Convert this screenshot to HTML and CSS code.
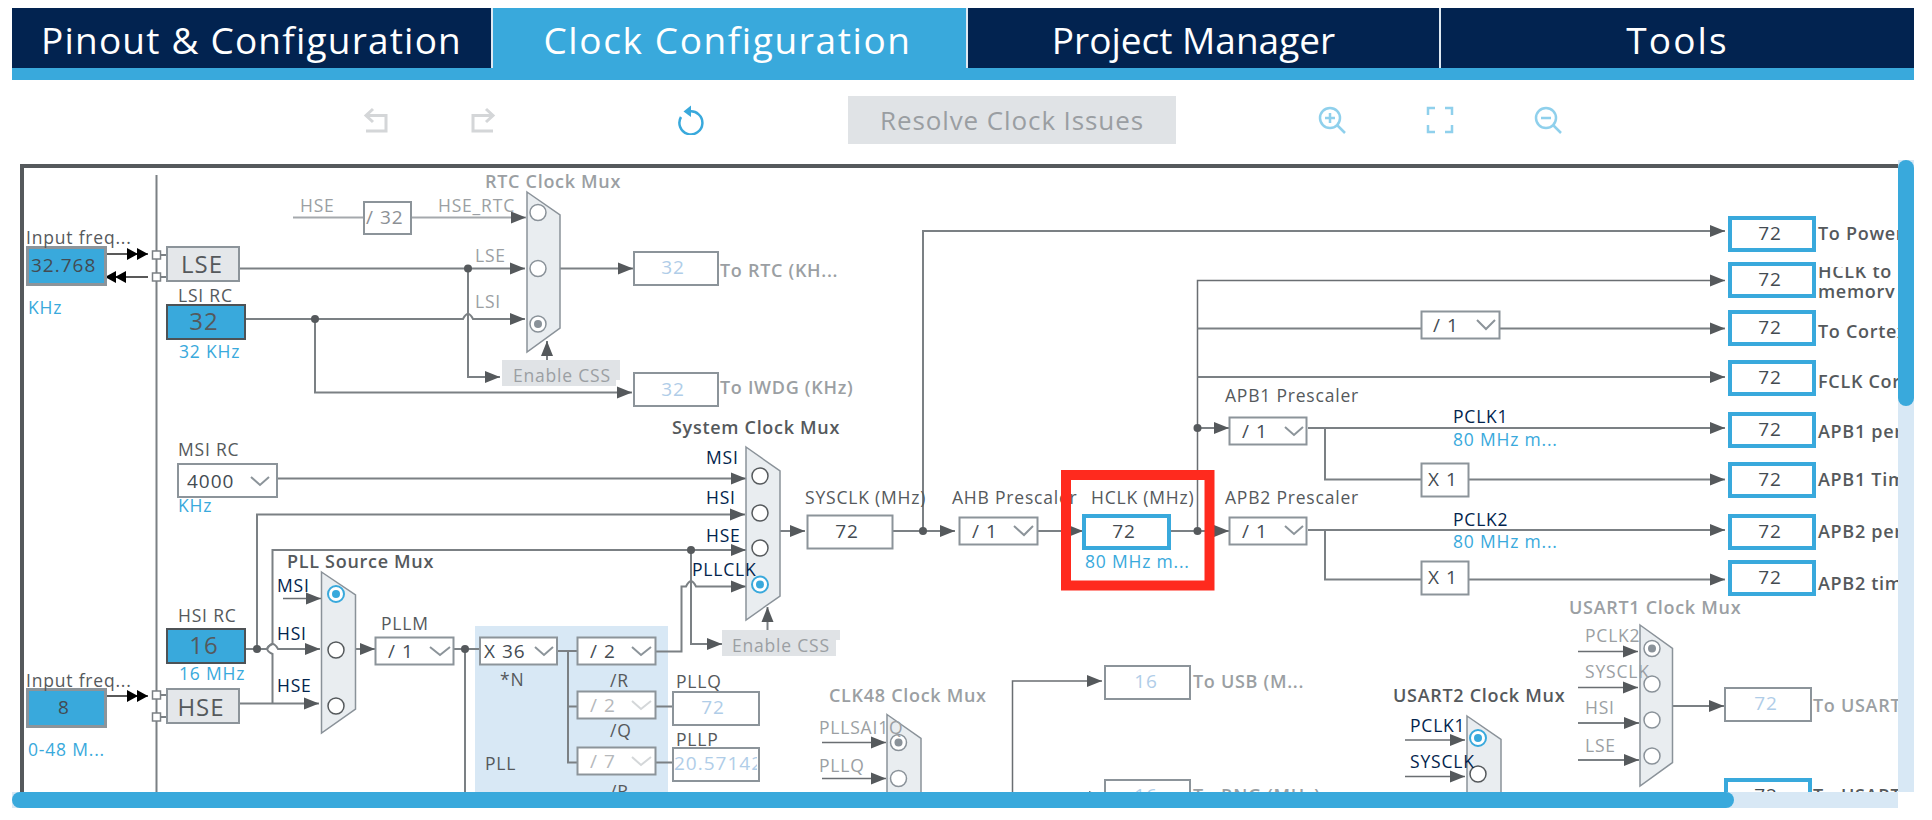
FILE: index.html
```html
<!DOCTYPE html>
<html>
<head lang="en">
    <meta charset="UTF-8">
    <title>Clock Configuration</title>
    <link rel="stylesheet" href="styles.css">
</head>
<body>
<div class="app">
    <ul class="tabs">
        <li class="pinout">Pinout &amp; Configuration</li>
        <li class="active">Clock Configuration</li>
        <li class="project">Project Manager</li>
        <li class="tools">Tools</li>
    </ul>

    <div class="toolbar">
        <svg class="tool undo" viewBox="0 0 28 28"><path d="M11 3 4 9.500 11 16M5 9.500H24V25H4"/></svg>
        <svg class="tool redo" viewBox="0 0 28 28"><path d="M17 3 24 9.500 17 16M23 9.500H4V25H24"/></svg>
        <svg class="tool reset" viewBox="0 0 28 30"><path d="M12 6.500A11.500 11.500 0 1 1 4 12"/><path class="fill" d="M14 0.500V12L6.500 6.500Z"/></svg>
        <button class="resolve">Resolve Clock Issues</button>
        <svg class="tool zoom-in" viewBox="0 0 28 28"><circle cx="12" cy="12" r="10"/><path d="M12 7V17M7 12H17M19 19 27 27"/></svg>
        <svg class="tool full" viewBox="0 0 28 28"><path d="M9 2H2V9M19 2H26V9M9 26H2V19M19 26H26V19"/></svg>
        <svg class="tool zoom-out" viewBox="0 0 28 28"><circle cx="12" cy="12" r="10"/><path d="M7 12H17M19 19 27 27"/></svg>
    </div>

    <div class="view">
        <svg class="diagram" width="1886" height="632" viewBox="12 160 1886 632">
            <defs>
                <marker id="arr" markerUnits="userSpaceOnUse" markerWidth="16" markerHeight="14" refX="15" refY="7" orient="auto"><path class="head" d="M0 1 15 7 0 13Z"/></marker>
                <marker id="arrb" markerUnits="userSpaceOnUse" markerWidth="22" markerHeight="14" refX="21" refY="7" orient="auto"><path class="headb" d="M0 1 11 7 0 13ZM10 1 21 7 10 13Z"/></marker>
                <clipPath id="hclkclip"><rect x="1817" y="267" width="82" height="31"/></clipPath>
                <clipPath id="pllpclip"><rect x="673" y="748" width="84" height="32"/></clipPath>
            </defs>

            <!-- pll area and frame -->
            <rect class="pll-bg" x="475" y="626" width="193" height="170"/>
            <path class="frame" d="M22 800V166H1900"/>
            <path class="wire" d="M156.500 175V800"/>

            <!-- external clock pins -->
            <path class="pin-wire" d="M106 254H148" marker-end="url(#arrb)"/>
            <path class="pin-wire" d="M148 277H105" marker-end="url(#arrb)"/>
            <path class="pin-wire" d="M106 696H148" marker-end="url(#arrb)"/>
            <path class="wire" d="M161 255H167M161 277H167M161 695H167M161 717H167"/>
            <rect class="pin" x="152.500" y="251" width="8" height="8"/>
            <rect class="pin" x="152.500" y="273" width="8" height="8"/>
            <rect class="pin" x="152.500" y="691" width="8" height="8"/>
            <rect class="pin" x="152.500" y="713" width="8" height="8"/>

            <!-- wires, disabled ones first -->
            <path class="wire soft" d="M293 217.500H363"/>
            <path class="wire soft" d="M411 217.500H526" marker-end="url(#arr)"/>
            <path class="wire" d="M240 268.500H525" marker-end="url(#arr)"/>
            <path class="wire" d="M245 319H463Q468 309 473 319H525" marker-end="url(#arr)"/>
            <path class="wire" d="M468 268.500V377H500" marker-end="url(#arr)"/>
            <path class="wire" d="M315 319V392.500H632" marker-end="url(#arr)"/>
            <path class="wire" d="M560 268.500H633" marker-end="url(#arr)"/>
            <path class="wire" d="M547 360V341" marker-end="url(#arr)"/>
            <path class="wire" d="M278 478.500H746" marker-end="url(#arr)"/>
            <path class="wire" d="M257 649V514.500H745" marker-end="url(#arr)"/>
            <path class="wire" d="M272.500 703V654Q262 649 272.500 644V550H746" marker-end="url(#arr)"/>
            <path class="wire" d="M691 550V644H722" marker-end="url(#arr)"/>
            <path class="wire" d="M656 651.500H681.500V586.500H686Q691 576 696 586.500H746" marker-end="url(#arr)"/>
            <path class="wire" d="M767.500 630V607" marker-end="url(#arr)"/>
            <path class="wire" d="M245 649H267Q272.500 639 278 649H320" marker-end="url(#arr)"/>
            <path class="wire" d="M240 703.500H319" marker-end="url(#arr)"/>
            <path class="wire thin" d="M283 598.500H321" marker-end="url(#arr)"/>
            <path class="wire" d="M355 649H375" marker-end="url(#arr)"/>
            <path class="wire" d="M454 649H479M465 649V800"/>
            <path class="wire" d="M557 651H577M568 651V762.500H577M568 706.500H577"/>
            <path class="wire" d="M655 706.500H673M655 762.500H673"/>
            <path class="wire" d="M780 531H805" marker-end="url(#arr)"/>
            <path class="wire" d="M893 531H955" marker-end="url(#arr)"/>
            <path class="wire" d="M923 531V231H1725" marker-end="url(#arr)"/>
            <path class="wire" d="M1038 531H1083" marker-end="url(#arr)"/>
            <path class="wire" d="M1170 531H1229" marker-end="url(#arr)"/>
            <path class="wire thin" d="M1197.500 531V280.500H1725" marker-end="url(#arr)"/>
            <path class="wire" d="M1197.500 328.500H1725" marker-end="url(#arr)"/>
            <path class="wire" d="M1197.500 377H1725" marker-end="url(#arr)"/>
            <path class="wire" d="M1197.500 428H1229" marker-end="url(#arr)"/>
            <path class="wire" d="M1308 428H1725" marker-end="url(#arr)"/>
            <path class="wire" d="M1325 428V479.500H1725" marker-end="url(#arr)"/>
            <path class="wire" d="M1308 530H1725" marker-end="url(#arr)"/>
            <path class="wire" d="M1325 530V579.500H1725" marker-end="url(#arr)"/>
            <path class="wire thin" d="M1012.500 800V681H1102" marker-end="url(#arr)"/>
            <path class="wire thin" d="M1040 797H1104" marker-end="url(#arr)"/>
            <path class="wire thin" d="M822 742.500H886" marker-end="url(#arr)"/>
            <path class="wire thin" d="M822 778.500H886" marker-end="url(#arr)"/>
            <path class="wire thin" d="M1405 740H1465" marker-end="url(#arr)"/>
            <path class="wire thin" d="M1405 776.500H1465" marker-end="url(#arr)"/>
            <path class="wire thin" d="M1578 651.500H1638" marker-end="url(#arr)"/>
            <path class="wire thin" d="M1578 687.500H1638" marker-end="url(#arr)"/>
            <path class="wire" d="M1578 723H1639" marker-end="url(#arr)"/>
            <path class="wire" d="M1578 760H1639" marker-end="url(#arr)"/>
            <path class="wire" d="M1672 706H1724" marker-end="url(#arr)"/>

            <circle class="dot" cx="468" cy="268.500" r="4"/>
            <circle class="dot" cx="315" cy="319" r="4"/>
            <circle class="dot" cx="257" cy="649" r="4"/>
            <circle class="dot" cx="465" cy="649" r="4"/>
            <circle class="dot" cx="691" cy="550" r="4"/>
            <circle class="dot" cx="923" cy="531" r="4"/>
            <circle class="dot" cx="1197.500" cy="531" r="4"/>
            <circle class="dot" cx="1197.500" cy="428" r="4"/>

            <!-- muxes -->
            <polygon class="mux" points="527,192 560,215 560,328 527,352"/>
            <circle class="radio" cx="538" cy="212.500" r="8"/>
            <circle class="radio" cx="538" cy="268.500" r="8"/>
            <circle class="radio" cx="538" cy="324" r="8"/><circle class="sel-off" cx="538" cy="324" r="4"/>

            <polygon class="mux" points="746,447 780,471 780,596 746,620"/>
            <circle class="radio dark" cx="760" cy="476" r="8"/>
            <circle class="radio dark" cx="760" cy="513" r="8"/>
            <circle class="radio dark" cx="760" cy="548" r="8"/>
            <circle class="radio on" cx="760" cy="584.500" r="8"/><circle class="sel-on" cx="760" cy="584.500" r="4"/>

            <polygon class="mux" points="321.500,572 355.500,595 355.500,709 321.500,733"/>
            <circle class="radio on" cx="336" cy="594" r="8"/><circle class="sel-on" cx="336" cy="594" r="4"/>
            <circle class="radio dark" cx="336" cy="650" r="8"/>
            <circle class="radio dark" cx="336" cy="706" r="8"/>

            <polygon class="mux" points="887,714.500 921,738.500 921,840 887,860"/>
            <circle class="radio" cx="898.500" cy="742.500" r="8"/><circle class="sel-off" cx="898.500" cy="742.500" r="4"/>
            <circle class="radio" cx="898.500" cy="778.500" r="8"/>

            <polygon class="mux" points="1467,716 1501,739.500 1501,840 1467,860"/>
            <circle class="radio on" cx="1478" cy="738" r="8"/><circle class="sel-on" cx="1478" cy="738" r="4"/>
            <circle class="radio dark" cx="1478" cy="774" r="8"/>

            <polygon class="mux" points="1640,625 1672.500,648.500 1672.500,762.500 1640,786"/>
            <circle class="radio" cx="1652" cy="648.500" r="8"/><circle class="sel-off" cx="1652" cy="648.500" r="4"/>
            <circle class="radio" cx="1652" cy="684" r="8"/>
            <circle class="radio" cx="1652" cy="720" r="8"/>
            <circle class="radio" cx="1652" cy="756" r="8"/>

            <!-- source blocks -->
            <rect class="box in" x="27.500" y="247.500" width="78" height="37"/>
            <text class="val" x="31" y="272">32.768</text>
            <rect class="box in" x="27.500" y="689.500" width="78" height="37"/>
            <text class="val mid" x="64" y="714">8</text>
            <rect class="box grey" x="167" y="247" width="72" height="34"/>
            <text class="big mid" x="202" y="273">LSE</text>
            <rect class="box grey" x="167" y="689" width="72" height="34"/>
            <text class="big mid" x="201" y="716">HSE</text>
            <rect class="box rc" x="167" y="305" width="78" height="34"/>
            <text class="big mid" x="204" y="330">32</text>
            <rect class="box rc" x="167" y="629" width="78" height="34"/>
            <text class="big mid" x="204" y="654">16</text>

            <rect class="box" x="364" y="202" width="47" height="32"/>
            <text class="val off-dark" x="366" y="224">/ 32</text>
            <path class="css" d="M502 360H620V380H616V386H502Z"/>
            <text class="lbl off" x="513" y="382">Enable CSS</text>
            <path class="css" d="M722 630H840V640H836V656H722Z"/>
            <text class="lbl off" x="732" y="652">Enable CSS</text>

            <rect class="box" x="634" y="252" width="84" height="33"/>
            <text class="val dim mid" x="673" y="274">32</text>
            <rect class="box" x="634" y="373" width="84" height="33"/>
            <text class="val dim mid" x="673" y="396">32</text>
            <rect class="box" x="1105" y="666" width="85" height="33"/>
            <text class="val dim mid" x="1146" y="688">16</text>
            <rect class="box" x="1105" y="780" width="85" height="33"/>
            <text class="val dim mid" x="1146" y="802">16</text>
            <rect class="box" x="673" y="692" width="86" height="33"/>
            <text class="val dim mid" x="713" y="714">72</text>
            <rect class="box" x="673" y="748" width="86" height="33"/>
            <text class="val dim" x="674" y="770" clip-path="url(#pllpclip)">20.57142</text>
            <rect class="box" x="1725" y="688" width="86" height="33"/>
            <text class="val dim mid" x="1766" y="710">72</text>

            <rect class="box" x="807.500" y="515.500" width="85" height="33"/>
            <text class="val mid" x="847" y="538">72</text>
            <rect class="box" x="1421.500" y="463.500" width="47" height="33"/>
            <text class="val" x="1428" y="486">X 1</text>
            <rect class="box" x="1421.500" y="561.500" width="47" height="33"/>
            <text class="val" x="1428" y="584">X 1</text>

            <!-- dropdowns -->
            <rect class="box" x="178" y="464" width="99" height="33"/>
            <text class="val" x="187" y="488">4000</text>
            <polyline class="chev" points="251,477 260,485 269,477"/>
            <rect class="box" x="375.500" y="637.500" width="78" height="27"/>
            <text class="val" x="388" y="658">/ 1</text>
            <polyline class="chev" points="430,647 440,655 450,647"/>
            <rect class="box" x="480" y="637.500" width="77" height="27"/>
            <text class="val" x="484" y="658">X 36</text>
            <polyline class="chev" points="535,647 544,655 553,647"/>
            <rect class="box" x="577.500" y="637.500" width="78" height="27"/>
            <text class="val" x="590" y="658">/ 2</text>
            <polyline class="chev" points="632,647 641,655 651,647"/>
            <rect class="box" x="577.500" y="691.500" width="78" height="27"/>
            <text class="val off" x="590" y="712">/ 2</text>
            <polyline class="chev soft" points="632,701 641,709 651,701"/>
            <rect class="box" x="577.500" y="747.500" width="78" height="27"/>
            <text class="val off" x="590" y="768">/ 7</text>
            <polyline class="chev soft" points="632,757 641,765 651,757"/>
            <rect class="box" x="959.500" y="517.500" width="78" height="27"/>
            <text class="val" x="972" y="538">/ 1</text>
            <polyline class="chev" points="1014,526 1024,535 1033,526"/>
            <rect class="box" x="1229.500" y="417.500" width="77" height="27"/>
            <text class="val" x="1242" y="438">/ 1</text>
            <polyline class="chev" points="1285,427 1294,435 1303,427"/>
            <rect class="box" x="1229.500" y="517.500" width="77" height="27"/>
            <text class="val" x="1242" y="538">/ 1</text>
            <polyline class="chev" points="1285,526 1294,534 1303,526"/>
            <rect class="box" x="1421.500" y="311.500" width="78" height="27"/>
            <text class="val" x="1433" y="332">/ 1</text>
            <polyline class="chev" points="1477,320 1486,329 1495,320"/>

            <!-- output boxes -->
            <rect class="box out" x="1730" y="218" width="84" height="32"/><text class="val mid" x="1770" y="240">72</text>
            <rect class="box out" x="1730" y="264" width="84" height="32"/><text class="val mid" x="1770" y="286">72</text>
            <rect class="box out" x="1730" y="312" width="84" height="32"/><text class="val mid" x="1770" y="334">72</text>
            <rect class="box out" x="1730" y="362" width="84" height="32"/><text class="val mid" x="1770" y="384">72</text>
            <rect class="box out" x="1730" y="414" width="84" height="32"/><text class="val mid" x="1770" y="436">72</text>
            <rect class="box out" x="1730" y="464" width="84" height="32"/><text class="val mid" x="1770" y="486">72</text>
            <rect class="box out" x="1730" y="516" width="84" height="32"/><text class="val mid" x="1770" y="538">72</text>
            <rect class="box out" x="1730" y="562" width="84" height="32"/><text class="val mid" x="1770" y="584">72</text>
            <rect class="box out" x="1726" y="780" width="84" height="32"/><text class="val mid" x="1766" y="802">72</text>

            <!-- labels -->
            <text class="lbl" x="26" y="244">Input freq...</text>
            <text class="lbl" x="26" y="687">Input freq...</text>
            <text class="lbl blue" x="28" y="314">KHz</text>
            <text class="lbl blue" x="28" y="756">0-48 M...</text>
            <text class="lbl" x="178" y="302">LSI RC</text>
            <text class="lbl blue" x="179" y="358">32 KHz</text>
            <text class="lbl" x="178" y="456">MSI RC</text>
            <text class="lbl blue" x="178" y="512">KHz</text>
            <text class="lbl" x="178" y="622">HSI RC</text>
            <text class="lbl blue" x="179" y="680">16 MHz</text>

            <text class="lbl off" x="300" y="212">HSE</text>
            <text class="lbl off" x="438" y="212">HSE_RTC</text>
            <text class="lbl off" x="475" y="262">LSE</text>
            <text class="lbl off" x="475" y="308">LSI</text>
            <text class="title off" x="485" y="188">RTC Clock Mux</text>
            <text class="title off" x="720" y="277">To RTC (KH...</text>
            <text class="title off" x="720" y="394">To IWDG (KHz)</text>
            <text class="title" x="672" y="434">System Clock Mux</text>
            <text class="title" x="287" y="568">PLL Source Mux</text>

            <text class="lbl navy" x="706" y="464">MSI</text>
            <text class="lbl navy" x="706" y="504">HSI</text>
            <text class="lbl navy" x="706" y="542">HSE</text>
            <text class="lbl navy" x="692" y="576">PLLCLK</text>
            <text class="lbl navy" x="277" y="592">MSI</text>
            <text class="lbl navy" x="277" y="640">HSI</text>
            <text class="lbl navy" x="277" y="692">HSE</text>

            <text class="lbl" x="381" y="630">PLLM</text>
            <text class="lbl" x="500" y="686">*N</text>
            <text class="lbl" x="610" y="687">/R</text>
            <text class="lbl" x="610" y="737">/Q</text>
            <text class="lbl" x="610" y="798">/R</text>
            <text class="lbl" x="485" y="770">PLL</text>
            <text class="lbl" x="676" y="688">PLLQ</text>
            <text class="lbl" x="676" y="746">PLLP</text>

            <text class="lbl" x="805" y="504">SYSCLK (MHz)</text>
            <text class="lbl" x="952" y="504">AHB Prescaler</text>
            <text class="lbl" x="1091" y="504">HCLK (MHz)</text>
            <text class="lbl" x="1225" y="402">APB1 Prescaler</text>
            <text class="lbl" x="1225" y="504">APB2 Prescaler</text>
            <text class="lbl navy" x="1453" y="423">PCLK1</text>
            <text class="lbl blue" x="1453" y="446">80 MHz m...</text>
            <text class="lbl navy" x="1453" y="526">PCLK2</text>
            <text class="lbl blue" x="1453" y="548">80 MHz m...</text>

            <text class="title" x="1818" y="240">To Power</text>
            <text class="title" x="1818" y="278" clip-path="url(#hclkclip)">HCLK to</text>
            <text class="title" x="1818" y="298" clip-path="url(#hclkclip)">memory</text>
            <text class="title" x="1818" y="338">To Cortex</text>
            <text class="title" x="1818" y="388">FCLK Cortex</text>
            <text class="title" x="1818" y="438">APB1 peripheral</text>
            <text class="title" x="1818" y="486">APB1 Timer</text>
            <text class="title" x="1818" y="538">APB2 peripheral</text>
            <text class="title" x="1818" y="590">APB2 timer</text>

            <text class="title off" x="829" y="702">CLK48 Clock Mux</text>
            <text class="lbl off" x="819" y="734">PLLSAI1Q</text>
            <text class="lbl off" x="819" y="772">PLLQ</text>
            <text class="title off" x="1193" y="688">To USB (M...</text>
            <text class="title off" x="1193" y="802">To RNG (MHz)</text>
            <text class="title" x="1393" y="702">USART2 Clock Mux</text>
            <text class="lbl navy" x="1410" y="732">PCLK1</text>
            <text class="lbl navy" x="1410" y="768">SYSCLK</text>
            <text class="title off" x="1569" y="614">USART1 Clock Mux</text>
            <text class="lbl off" x="1585" y="642">PCLK2</text>
            <text class="lbl off" x="1585" y="678">SYSCLK</text>
            <text class="lbl off" x="1585" y="714">HSI</text>
            <text class="lbl off" x="1585" y="752">LSE</text>
            <text class="title off" x="1813" y="712">To USART1</text>
            <text class="title" x="1813" y="802">To USART2</text>

            <!-- highlighted hclk -->
            <rect class="box out" x="1084" y="516" width="85" height="32"/>
            <text class="val mid" x="1124" y="538">72</text>
            <text class="lbl blue" x="1085" y="568">80 MHz m...</text>
            <rect class="mark" x="1066" y="475" width="143.500" height="110.500"/>
        </svg>
        <div class="vbar"><div class="vthumb"></div></div>
        <div class="hbar"><div class="hthumb"></div></div>
    </div>
</div>
</body>
</html>
```

FILE: styles.css
```css
*{padding: 0;margin: 0;box-sizing: border-box;}
body{
    background: #fff;
    font-family: "Open Sans", "Liberation Sans", sans-serif;
}
.app{
    width: 1932px;
    padding: 8px 18px 0 12px;
}

.tabs{
    display: flex;
    height: 72px;
    padding-bottom: 12px;
    background: #39a9dc;
    list-style-type: none;
}
.tabs li{
    width: 473px;
    height: 60px;
    line-height: 63px;
    border-right: 2px solid #dfe9f2;
    background: #022350;
    color: #fff;
    font-size: 37px;
    text-align: center;
}
.tabs .pinout{width: 481px;letter-spacing: 1.200px;}
.tabs .active{width: 475px;background: #39a9dc;letter-spacing: 1.600px;padding-right: 4px;}
.tabs .project{padding-right: 20px;}
.tabs .tools{border-right: 0;letter-spacing: 2.100px;}

.toolbar{
    display: flex;
    align-items: center;
    height: 80px;
    padding-left: 350px;
}
.tool{
    width: 28px;
    height: 28px;
    fill: none;
    stroke-width: 2.5;
}
.undo,.redo{stroke: #d4d6d8;stroke-width: 3;}
.undo{margin-right: 79px;}
.redo{margin-right: 180px;}
.reset{stroke: #39a9dc;height: 30px;margin-right: 143px;}
.reset .fill{fill: #39a9dc;stroke: none;}
.zoom-in,.full,.zoom-out{stroke: #8fd0ec;}
.zoom-in{margin-right: 80px;}
.full{margin-right: 80px;}
.resolve{
    width: 328px;
    height: 48px;
    margin-right: 142px;
    border: 0;
    background: #e0e3e6;
    color: #9a9ea2;
    font-family: "Open Sans", "Liberation Sans", sans-serif;
    font-size: 26px;
    letter-spacing: 0.900px;
}

.view{
    display: grid;
    grid-template-columns: 1886px 16px;
    grid-template-rows: 632px 16px;
}
.diagram{display: block;background: #fff;}
.vbar{background: #d8e8f5;}
.vthumb{height: 246px;border-radius: 8px;background: #39a9dc;}
.hbar{background: #d8e8f5;}
.hthumb{width: 1722px;height: 16px;border-radius: 8px;background: #39a9dc;}

.frame{fill: none;stroke: #55595c;stroke-width: 4;}
.pll-bg{fill: #d8e8f5;}
.wire{fill: none;stroke: #7b8084;stroke-width: 2;}
.wire.thin{stroke: #6a6e72;stroke-width: 1.5;}
.wire.soft{stroke: #a5a9ad;}
.pin-wire{fill: none;stroke: #222;stroke-width: 1.5;}
.head{fill: #55595c;}
.headb{fill: #000;}
.dot{fill: #55595c;}
.pin{fill: #fff;stroke: #7b8084;stroke-width: 1.5;}

.mux{fill: #e9edf0;stroke: #8a9299;stroke-width: 1.5;}
.radio{fill: #fff;stroke: #8a9299;stroke-width: 1.5;}
.radio.dark{stroke: #55595c;}
.radio.on{stroke: #39a9dc;stroke-width: 2;}
.sel-on{fill: #39a9dc;}
.sel-off{fill: #8a9299;}

.box{fill: #fff;stroke: #8c949a;stroke-width: 2;}
.box.in{fill: #39a9dc;stroke-width: 3;}
.box.grey{fill: #e4e7ea;stroke-width: 2;}
.box.rc{fill: #39a9dc;stroke: #4d5256;stroke-width: 2;}
.box.out{stroke: #39a9dc;stroke-width: 4;}
.css{fill: #e0e3e6;}
.chev{fill: none;stroke: #8c949a;stroke-width: 2;}
.chev.soft{stroke: #d4d7d9;}
.mark{fill: none;stroke: #ff2a1e;stroke-width: 10;}

.diagram text{font-family: "Open Sans", "Liberation Sans", sans-serif;}
.lbl{font-size: 17.500px;letter-spacing: 0.800px;fill: #55595c;}
.val{font-size: 19px;letter-spacing: 1px;fill: #434b52;}
.big{font-size: 24px;letter-spacing: 1px;fill: #55595c;}
.title{font-size: 18px;font-weight: 600;letter-spacing: 0.700px;fill: #55595c;}
.mid{text-anchor: middle;}
.off{fill: #9b9fa3;}
.val.off{fill: #b5b8bb;}
.val.off-dark{fill: #8c9095;}
.dim{fill: #b0cde8;}
.blue{fill: #39a9dc;}
.navy{fill: #02244d;}
```
